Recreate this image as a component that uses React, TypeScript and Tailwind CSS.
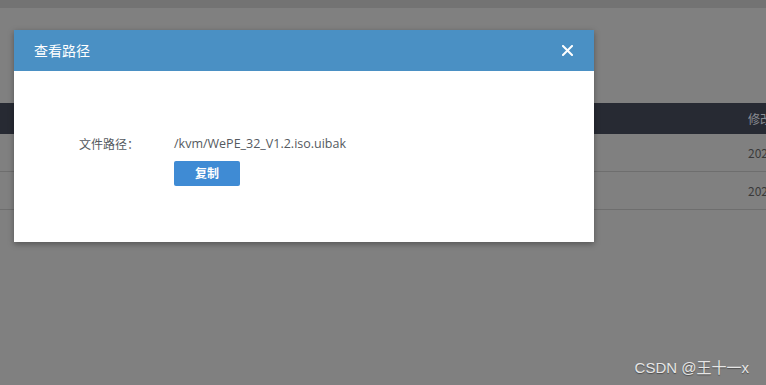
import React from "react";

export default function App() {
  const font = { fontFamily: '"Noto Sans CJK SC", "Noto Sans", "Liberation Sans", sans-serif' };
  return (
    <div className="relative h-[385px] w-[766px] overflow-hidden bg-[#808080]" style={font}>
      <div className="h-[8px] bg-[#737373]" />
      <div className="h-[95px]" />
      <div className="flex h-[31px] items-center justify-end bg-[#272a33] pr-0">
        <span className="w-[18px] overflow-hidden whitespace-nowrap text-[12px] text-[#8a8d94]">修改时间</span>
      </div>
      <div className="flex h-[38px] items-center justify-end border-b border-[#6e6e6e]">
        <span className="w-[18px] overflow-hidden whitespace-nowrap text-[12px] text-[#3a3a3a]">2022</span>
      </div>
      <div className="flex h-[38px] items-center justify-end border-b border-[#6e6e6e]">
        <span className="w-[18px] overflow-hidden whitespace-nowrap text-[12px] text-[#3a3a3a]">2022</span>
      </div>

      <div className="absolute left-[14px] top-[30px] w-[580px] bg-white shadow-[0_2px_6px_rgba(0,0,0,0.35)]">
        <div className="flex h-[41px] items-center justify-between bg-[#4a90c4] pl-[20px] pr-[21px]">
          <span className="text-[14px] text-white">查看路径</span>
          <svg width="11" height="11" viewBox="0 0 11 11">
            <path d="M1 1L10 10M10 1L1 10" stroke="white" strokeWidth="2" strokeLinecap="square" />
          </svg>
        </div>
        <div className="h-[171px] pt-[64px]">
          <div className="flex items-center">
            <span className="w-[160px] pl-[65px] text-[12px] text-[#555a60]">文件路径：</span>
            <span className="text-[12.5px] text-[#555a60]" style={{ fontFamily: '"Open Sans", "Noto Sans", sans-serif' }}>
              /kvm/WePE_32_V1.2.iso.uibak
            </span>
          </div>
          <div className="mt-[7px] pl-[160px]">
            <button className="flex h-[25px] w-[66px] items-center justify-center rounded-[2px] bg-[#3f8bd4] text-[12px] font-bold text-white">
              复制
            </button>
          </div>
        </div>
      </div>

      <div className="absolute right-[17px] top-[357px] text-[15px] text-[#e6e6e6] [text-shadow:0_1px_1px_rgba(0,0,0,0.4)]" style={{ fontFamily: '"Liberation Sans", "Noto Sans CJK SC", sans-serif' }}>
        CSDN @王十一x
      </div>
    </div>
  );
}
